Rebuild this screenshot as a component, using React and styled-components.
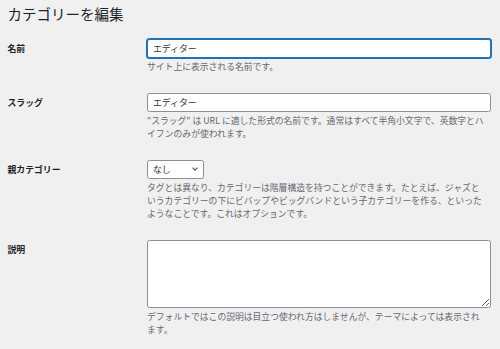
import React from "react";
import styled, { createGlobalStyle } from "styled-components";

const GlobalStyle = createGlobalStyle`
    html, body {
        margin: 0;
        padding: 0;
        background: #f0f0f1;
    }
    body {
        font-family: "Noto Sans CJK JP", "Noto Sans", sans-serif;
        color: #3c434a;
    }
`;

const Wrap = styled.div`
    width: 500px;
    height: 349px;
    overflow: hidden;
    box-sizing: border-box;
    padding: 0 9px 0 7.5px;
`;

const Heading = styled.h1`
    margin: 0;
    padding: 4px 0 5.5px;
    font-size: 14.5px;
    font-weight: 400;
    line-height: 19px;
    color: #1d2327;
`;

const Row = styled.div`
    display: grid;
    grid-template-columns: 139.5px 1fr;
    padding: 10px 0;
`;

const Label = styled.label`
    font-size: 8.85px;
    font-weight: 700;
    line-height: 19px;
    color: #1d2327;
`;

const Field = styled.div`
    display: flex;
    flex-direction: column;
    align-items: flex-start;
    min-width: 0;
`;

const TextInput = styled.input`
    box-sizing: border-box;
    width: 100%;
    height: 19px;
    margin: 0;
    padding: 0 5px;
    font-family: inherit;
    font-size: 8.85px;
    color: #2c3338;
    background: #fff;
    border: 1px solid ${({ $focused }) => ($focused ? "#2271b1" : "#8c8f94")};
    border-radius: 2.5px;
    box-shadow: ${({ $focused }) => ($focused ? "0 0 0 1px #2271b1" : "none")};
    outline: none;
`;

const SelectBox = styled.div`
    box-sizing: border-box;
    display: flex;
    align-items: center;
    justify-content: space-between;
    width: 57px;
    height: 19px;
    padding: 0 5px;
    font-size: 8.85px;
    color: #2c3338;
    background: #fff;
    border: 1px solid #8c8f94;
    border-radius: 2.5px;
`;

const TextArea = styled.textarea`
    box-sizing: border-box;
    display: block;
    width: 100%;
    height: 68px;
    margin: 0;
    padding: 3px 5px;
    font-family: inherit;
    font-size: 8.85px;
    color: #2c3338;
    background: #fff;
    border: 1px solid #8c8f94;
    border-radius: 2.5px;
    resize: vertical;
    outline: none;
`;

const Description = styled.p`
    max-width: 341px;
    margin: 2px 0 0;
    font-size: 8.8px;
    line-height: 13px;
    color: #646970;
`;

const Chevron = () => (
    <svg width="6" height="4" viewBox="0 0 6 4" fill="none">
        <path d="M0.6 0.7 L3 3.1 L5.4 0.7" stroke="#50575e" strokeWidth="1.2" />
    </svg>
);

const App = () => {
    return (
        <Wrap>
            <GlobalStyle />
            <Heading>カテゴリーを編集</Heading>

            <Row>
                <Label>名前</Label>
                <Field>
                    <TextInput $focused defaultValue="エディター" />
                    <Description>サイト上に表示される名前です。</Description>
                </Field>
            </Row>

            <Row>
                <Label>スラッグ</Label>
                <Field>
                    <TextInput defaultValue="エディター" />
                    <Description>
                        "スラッグ" は URL に適した形式の名前です。通常はすべて半角小文字で、英数字とハイフンのみが使われます。
                    </Description>
                </Field>
            </Row>

            <Row>
                <Label>親カテゴリー</Label>
                <Field>
                    <SelectBox>
                        <span>なし</span>
                        <Chevron />
                    </SelectBox>
                    <Description>
                        タグとは異なり、カテゴリーは階層構造を持つことができます。たとえば、ジャズというカテゴリーの下にビバップやビッグバンドという子カテゴリーを作る、といったようなことです。これはオプションです。
                    </Description>
                </Field>
            </Row>

            <Row>
                <Label>説明</Label>
                <Field>
                    <TextArea />
                    <Description>
                        デフォルトではこの説明は目立つ使われ方はしませんが、テーマによっては表示されます。
                    </Description>
                </Field>
            </Row>
        </Wrap>
    );
};

export default App;
